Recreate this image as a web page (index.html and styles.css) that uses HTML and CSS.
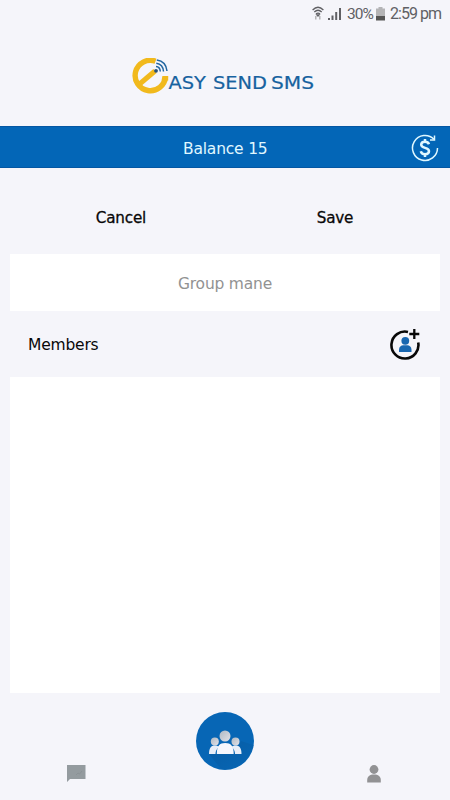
FILE: index.html
```html
<!DOCTYPE html>
<html lang="en" dir="ltr">
	<head>
		<meta charset="utf-8" />
		<title>Easy Send SMS</title>
		<link rel="stylesheet" href="styles.css">
	</head>
	<body>
		<div class="status-bar flex">
			<svg class="wifi" width="12" height="15" viewBox="0 0 12 15" fill="none" stroke="#606064" stroke-width="1.3">
				<path d="M.6 4Q6-1.500 11.400 4M2.300 6Q6 2.500 9.700 6M4 8q2-1.700 4 0"/>
				<path d="M3.800 10v3.500M7.800 10v3.500" stroke="#aaa"/>
				<path d="M5 9h2L6 10z" fill="#606064"/>
			</svg>
			<svg class="signal" width="14" height="13" viewBox="0 0 14 13" fill="#606064">
				<path d="M0 11h2v2H0zM3.500 8.500h2V13h-2zM7.200 5h2v8h-2zM11 1h2v12h-2z"/>
			</svg>
			<span class="percent">30%</span>
			<svg class="battery" width="9" height="14" viewBox="0 0 9 14">
				<path d="M2.500 0h4v1.500H9V9H0V1.500h2.500z" fill="#b4b4b6"/>
				<path d="M0 9h9v4.500H0z" fill="#555"/>
			</svg>
			<span class="time">2:59 pm</span>
		</div>
		<header class="brand">
			<svg width="184" height="40" viewBox="0 0 184 40">
				<path d="M24.500 3.200A15.200 15.200 0 1 0 34.500 18.500" fill="none" stroke="#f1b91c" stroke-width="5.400"/>
				<path d="M31.500 18H37.200V22.500H30.500z" fill="#f1b91c"/>
				<path d="M8 26.500L24 13" stroke="#f1b91c" stroke-width="5"/>
				<circle cx="25" cy="12.800" r="1.900" fill="#26527d"/>
				<g fill="none" stroke="#2166a1" stroke-width="1.500">
					<path d="M25 8.600Q29 8.800 29.300 13.500"/>
					<path d="M25.300 5.300Q32 6.300 32.500 13.500"/>
					<path d="M25.800 2Q35 3.300 36 13"/>
				</g>
				<text class="brand-name" x="37.500" y="31" textLength="37.500" lengthAdjust="spacingAndGlyphs">ASY</text>
				<text class="brand-name" x="82" y="31" textLength="54" lengthAdjust="spacingAndGlyphs">SEND</text>
				<text class="brand-name" x="140" y="31" textLength="43" lengthAdjust="spacingAndGlyphs">SMS</text>
			</svg>
		</header>
		<div class="balance flex">
			<span>Balance 15</span>
			<svg class="refresh" width="28" height="28" viewBox="0 0 28 28" fill="none" stroke="#e0f8ff" stroke-width="1.500">
				<path d="M26.500 14A12.500 12.500 0 1 1 23 5.300"/>
				<path d="M23.500 1.500V6H19"/>
				<path d="M18 10.200C17.300 8.300 15.800 7.700 14 7.700c-2.200 0-3.800 1.100-3.800 3 0 4 7.800 2.300 7.800 6.300 0 2-1.700 3.200-4 3.200-2.100 0-3.700-.9-4.200-3M14 5v3M14 20v3" stroke-width="2.500"/>
			</svg>
		</div>
		<div class="actions grid">
			<button type="button" class="action">Cancel</button>
			<button type="button" class="action">Save</button>
		</div>
		<input class="group-name" type="text" placeholder="Group mane" />
		<div class="members flex">
			<span>Members</span>
			<button type="button" class="add-member" title="Add member">
				<svg width="30" height="32" viewBox="0 0 30 32">
					<path d="M18 2.900A13.500 13.500 0 1 0 28.200 13.500" fill="none" stroke="#080808" stroke-width="2.600"/>
					<path d="M24.300 0v10M19.300 5h10" stroke="#080808" stroke-width="2.300"/>
					<circle cx="15.300" cy="11.800" r="3.900" fill="#1766b0"/>
					<path d="M9 23v-2.200c0-3 2-4.500 4.300-4.500h4c2.300 0 4.200 1.500 4.200 4.500V23z" fill="#1766b0"/>
				</svg>
			</button>
		</div>
		<div class="member-list"></div>
		<nav class="tabs grid">
			<svg class="tab" width="19" height="18" viewBox="0 0 19 18">
				<path d="M0 0h18.500v14H3L0 17z" fill="#949b9f"/>
				<path d="M9 10l2-2 1.500 1L15 6" fill="none" stroke="#8b9296"/>
			</svg>
			<svg class="groups" width="60" height="60" viewBox="0 0 60 60">
				<defs>
					<linearGradient id="head" x2="1" y2="1">
						<stop offset="0" stop-color="#aeb8c3"/>
						<stop offset="1" stop-color="#e2e2e8"/>
					</linearGradient>
					<linearGradient id="shade" x2="1" y2="1">
						<stop offset="0" stop-color="#075ca4"/>
						<stop offset="1" stop-color="#0766b5"/>
					</linearGradient>
				</defs>
				<circle cx="30" cy="30" r="29" fill="#0766b5"/>
				<path d="M14 43L26 58Q51 60 58.500 34L46 30 39 43z" fill="url(#shade)"/>
				<circle cx="19.800" cy="30.500" r="4" fill="url(#head)"/>
				<circle cx="40.500" cy="30.500" r="4" fill="url(#head)"/>
				<circle cx="30" cy="25" r="5.500" fill="url(#head)"/>
				<path d="M14 43c0-6 2-8.500 6-8.500 2 0 3 .5 4 1.500-2.500 2-3.500 4-3.500 7zM46.500 43c0-6-2-8.500-6-8.500-2 0-3 .5-4 1.500 2.500 2 3.500 4 3.500 7z" fill="#e8eef8"/>
				<path d="M21.800 43c0-8 2.700-11 8.400-11s8.500 3 8.500 11z" fill="#f5f7fd"/>
			</svg>
			<svg class="tab" width="14" height="18" viewBox="0 0 14 18" fill="#929294">
				<circle cx="7" cy="4.500" r="4.400"/>
				<path d="M.2 17.500V15c0-3.500 2.500-5.500 6.800-5.500s6.800 2 6.800 5.500v2.500z"/>
			</svg>
		</nav>
	</body>
</html>
```
FILE: styles.css
```css
body {
	margin: 0;
	height: 800px;
	display: flex;
	flex-direction: column;
	overflow: hidden;
	background-color: #f5f5fa;
	color: #080808;
	font: 15.5px/20px "DejaVu Sans", sans-serif;
	letter-spacing: -0.2px;
}

svg {
	display: block;
	flex: none;
}

button {
	padding: 0;
	border: none;
	background: none;
	color: inherit;
	font: inherit;
	letter-spacing: inherit;
	cursor: pointer;
}

.flex {
	display: flex;
	align-items: center;
}

.grid {
	display: grid;
}

.status-bar {
	height: 27px;
	padding-right: 9px;
	justify-content: flex-end;
	color: #606064;
	font: 16px/28px Roboto, sans-serif;
}

.signal {
	margin: 0 5px 0 4px;
}

.percent {
	width: 26px;
	font-size: 15.5px;
	letter-spacing: -1px;
}

.battery {
	margin: 0 5px 0 3px;
}

.time {
	width: 51px;
	font-size: 16px;
	letter-spacing: -0.95px;
	white-space: nowrap;
}

.brand {
	height: 70px;
	padding: 29px 0 0 131px;
}

.brand svg {
	margin-top: 2px;
}

.brand-name {
	fill: #17629f;
	stroke: #17629f;
	stroke-width: 0.2px;
	font: 17px "DejaVu Sans", sans-serif;
	letter-spacing: 0;
}

.balance {
	box-sizing: border-box;
	height: 42px;
	padding: 2px 11px 0 183px;
	justify-content: space-between;
	border: solid #0457a3;
	border-width: 1px 0;
	background-color: #0366b7;
	color: #e0f8ff;
}

.balance span,
.members span {
	padding-top: 2px;
}

.actions {
	height: 86px;
	padding: 0 6px 0 12px;
	grid-template-columns: 218px 1fr;
	align-items: center;
}

.action {
	padding-top: 14px;
	font-size: 15.2px;
	-webkit-text-stroke: 0.3px;
}

.action:last-child {
	padding-right: 4px;
}

.group-name {
	box-sizing: border-box;
	height: 57px;
	margin: 0 10px;
	padding: 2px 0 0;
	border: none;
	background-color: #fff;
	font: inherit;
	letter-spacing: inherit;
	text-align: center;
}

.group-name::placeholder {
	color: #929292;
}

.members {
	height: 66px;
	padding: 0 30px 0 28px;
	justify-content: space-between;
}

.add-member {
	padding-top: 1px;
}

.member-list {
	height: 316px;
	margin: 0 10px;
	background-color: #fff;
}

.tabs {
	height: 106px;
	grid-template-columns: 153px 144px 153px;
	justify-items: center;
	align-items: start;
}

.tab {
	margin-top: 72px;
}

.groups {
	margin-top: 18px;
}
```
